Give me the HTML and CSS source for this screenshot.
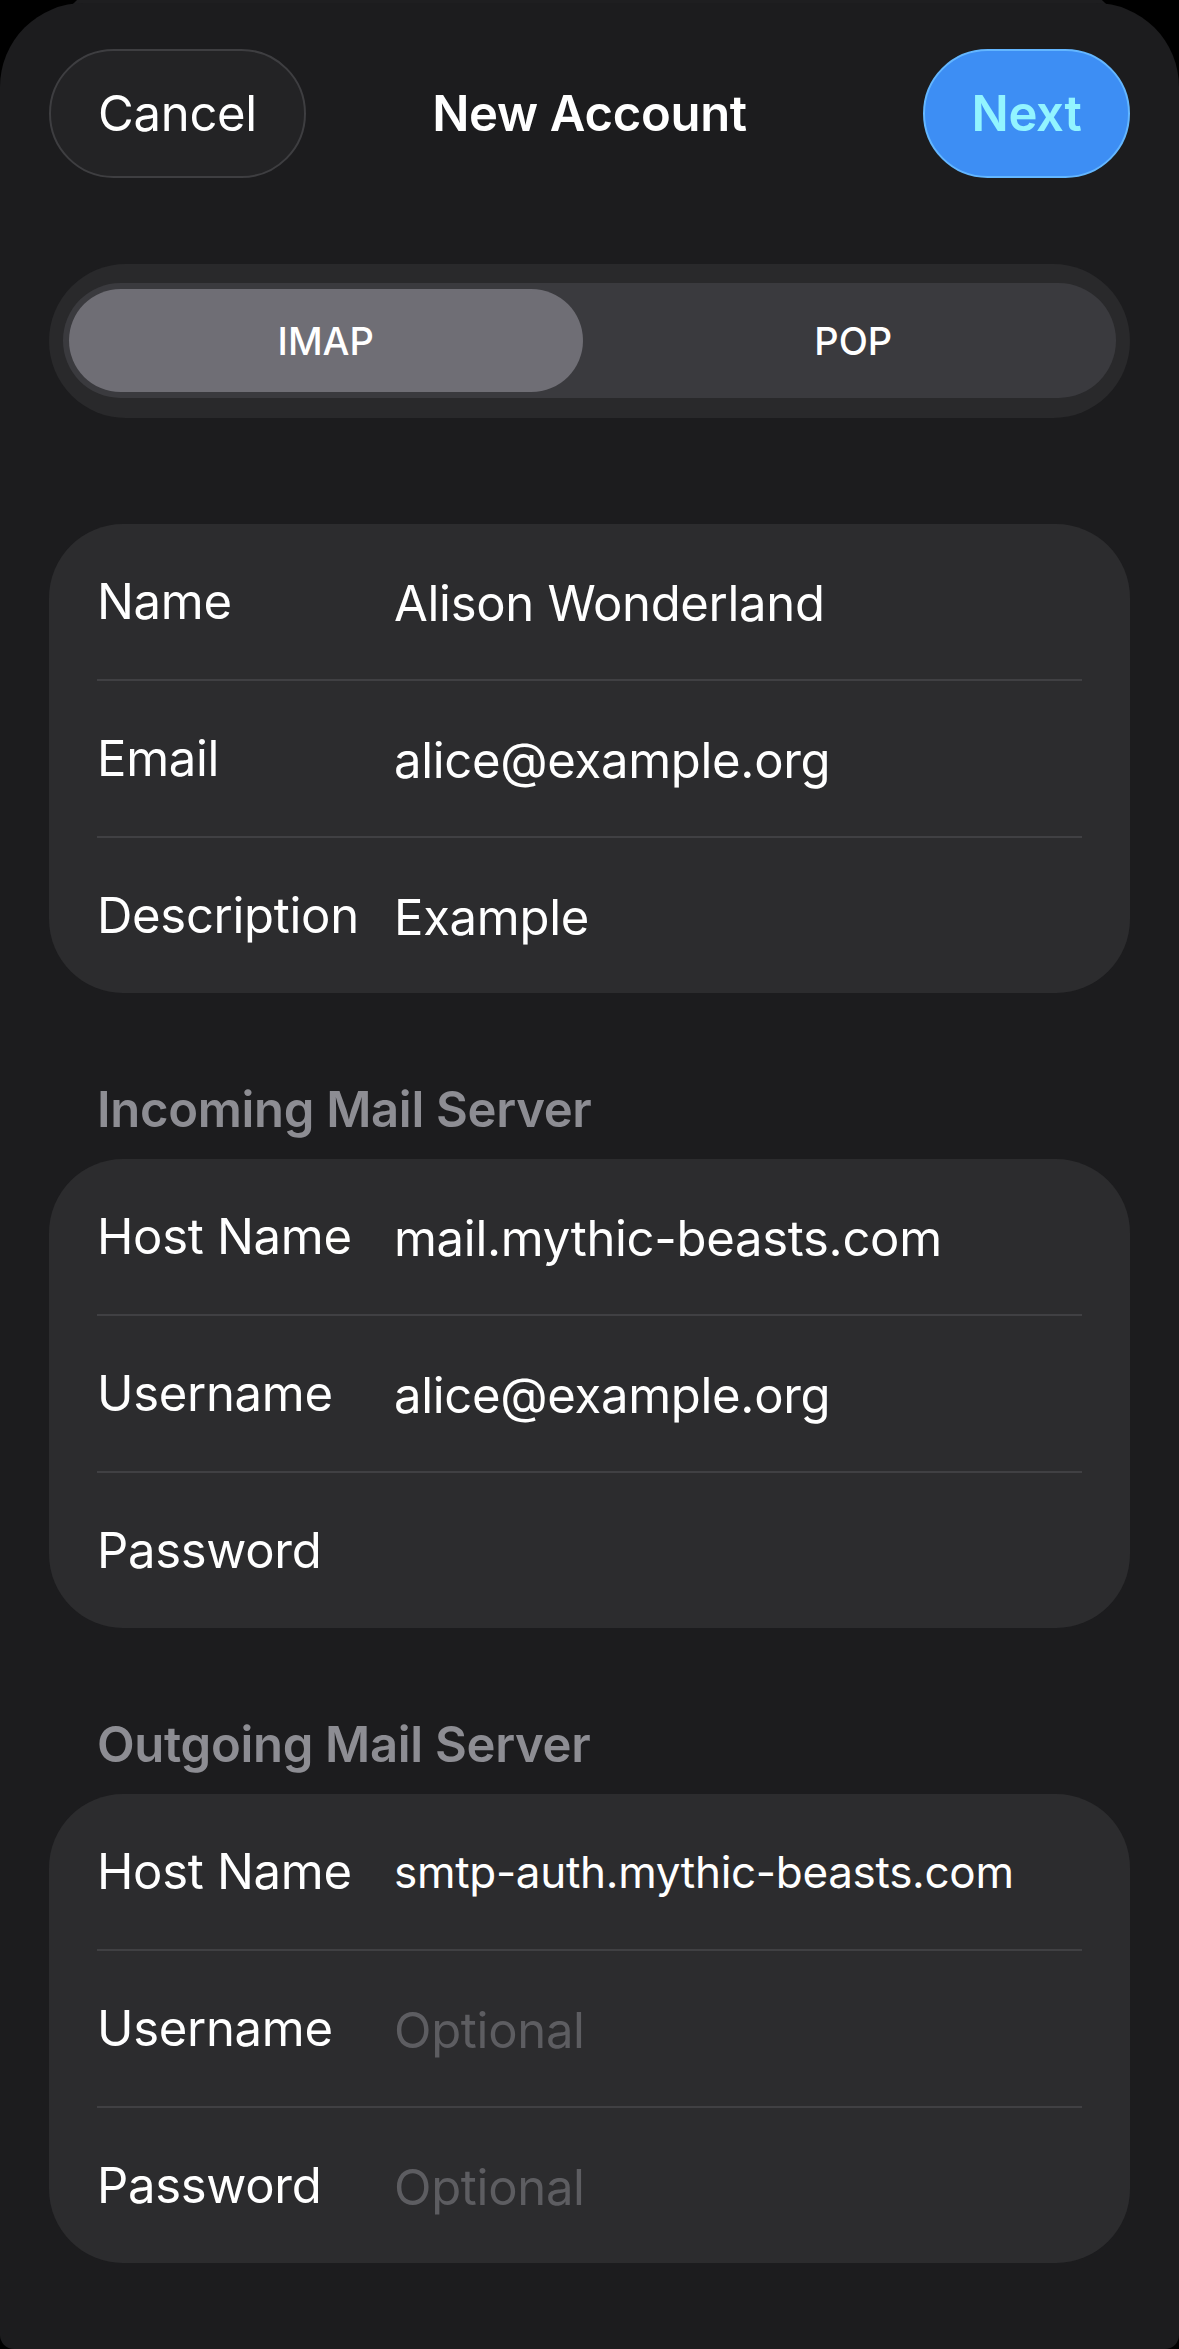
FILE: index.html
```html
<!DOCTYPE html>
<html lang="en">
<head>
<meta charset="utf-8">
<title>New Account</title>
<link rel="stylesheet" href="styles.css">
</head>
<body>
<div class="screen">
  <div class="backsheet"></div>
  <main class="sheet">
    <header class="topbar">
      <button class="btn btn-cancel">Cancel</button>
      <h1 class="title">New Account</h1>
      <button class="btn btn-next">Next</button>
    </header>

    <div class="segmented">
      <div class="track">
        <div class="seg seg-active">IMAP</div>
        <div class="seg">POP</div>
      </div>
    </div>

    <section class="card card-first">
      <div class="row"><span class="label">Name</span><span class="value">Alison Wonderland</span></div>
      <div class="row"><span class="label">Email</span><span class="value">alice@example.org</span></div>
      <div class="row"><span class="label">Description</span><span class="value">Example</span></div>
    </section>

    <h2 class="section-title">Incoming Mail Server</h2>
    <section class="card">
      <div class="row"><span class="label">Host Name</span><span class="value">mail.mythic-beasts.com</span></div>
      <div class="row"><span class="label">Username</span><span class="value">alice@example.org</span></div>
      <div class="row"><span class="label">Password</span><span class="value"></span></div>
    </section>

    <h2 class="section-title">Outgoing Mail Server</h2>
    <section class="card">
      <div class="row"><span class="label">Host Name</span><span class="value value-small">smtp-auth.mythic-beasts.com</span></div>
      <div class="row"><span class="label">Username</span><span class="value placeholder">Optional</span></div>
      <div class="row"><span class="label">Password</span><span class="value placeholder">Optional</span></div>
    </section>
  </main>
</div>
</body>
</html>
```
FILE: styles.css
```css
* { box-sizing: border-box; }

html, body {
  margin: 0;
  padding: 0;
  background: #000;
}

body {
  width: 1179px;
  height: 2349px;
  overflow: hidden;
  font-family: Inter, "Noto Sans", "Liberation Sans", sans-serif;
  color: #fff;
  -webkit-font-smoothing: antialiased;
}

.screen {
  position: relative;
  width: 1179px;
  height: 2349px;
  border-radius: 0 0 14px 14px;
  overflow: hidden;
}

.backsheet {
  position: absolute;
  left: 50px;
  right: 50px;
  top: -20px;
  height: 160px;
  background: #1e1e20;
  border-radius: 80px;
}

.sheet {
  position: relative;
  margin-top: 3px;
  height: 2346px;
  background: #1c1c1e;
  border-radius: 84px 84px 0 0;
  padding: 46px 49px 0;
}

/* Top bar */
.topbar {
  display: grid;
  grid-template-columns: 1fr auto 1fr;
  align-items: center;
  height: 129px;
}

.btn {
  font-family: inherit;
  height: 129px;
  border-radius: 65px;
  font-size: 49px;
  letter-spacing: -0.3px;
  padding: 0;
  display: flex;
  align-items: center;
  justify-content: center;
}

.btn-cancel {
  justify-self: start;
  width: 257px;
  background: #232325;
  border: 2px solid #3e3e41;
  color: #fff;
  font-weight: 400;
}

.btn-next {
  justify-self: end;
  width: 207px;
  background: #3d8ef4;
  border: 2px solid #63b6ff;
  color: #92f4ff;
  font-weight: 600;
}

.title {
  margin: 0;
  font-size: 49px;
  font-weight: 600;
  letter-spacing: -0.3px;
}

/* Segmented control */
.segmented {
  margin-top: 86px;
  height: 154px;
  padding: 19px 14px 20px;
  background: #29292b;
  border-radius: 77px;
}

.track {
  height: 115px;
  padding: 6px;
  background: #3a3a3e;
  border-radius: 58px;
  display: grid;
  grid-template-columns: 1fr 1fr;
  column-gap: 14px;
}

.seg {
  display: flex;
  align-items: center;
  justify-content: center;
  border-radius: 52px;
  font-size: 38px;
  font-weight: 500;
  color: #fff;
}

.seg-active {
  background: #6f6e75;
}

/* Cards */
.card {
  background: #2c2c2e;
  border-radius: 74px;
  padding: 0 48px;
}

.card-first {
  margin-top: 106px;
}

.row {
  display: grid;
  grid-template-columns: 297px 1fr;
  align-items: center;
  height: 155px;
}

.row + .row {
  border-top: 2px solid #404043;
  height: 157px;
}

.label {
  font-size: 49px;
  line-height: 60px;
  letter-spacing: -0.3px;
  color: #fff;
}

.value {
  font-size: 49px;
  line-height: 60px;
  letter-spacing: -0.3px;
  color: #fff;
  padding-top: 5px;
  white-space: nowrap;
}

.value-small {
  font-size: 44px;
  padding-top: 0;
}

.placeholder {
  color: #5d5d61;
}

.section-title {
  margin: 87px 0 19px 48px;
  font-size: 49px;
  line-height: 60px;
  font-weight: 600;
  letter-spacing: -0.3px;
  color: #8d8d93;
}
```
